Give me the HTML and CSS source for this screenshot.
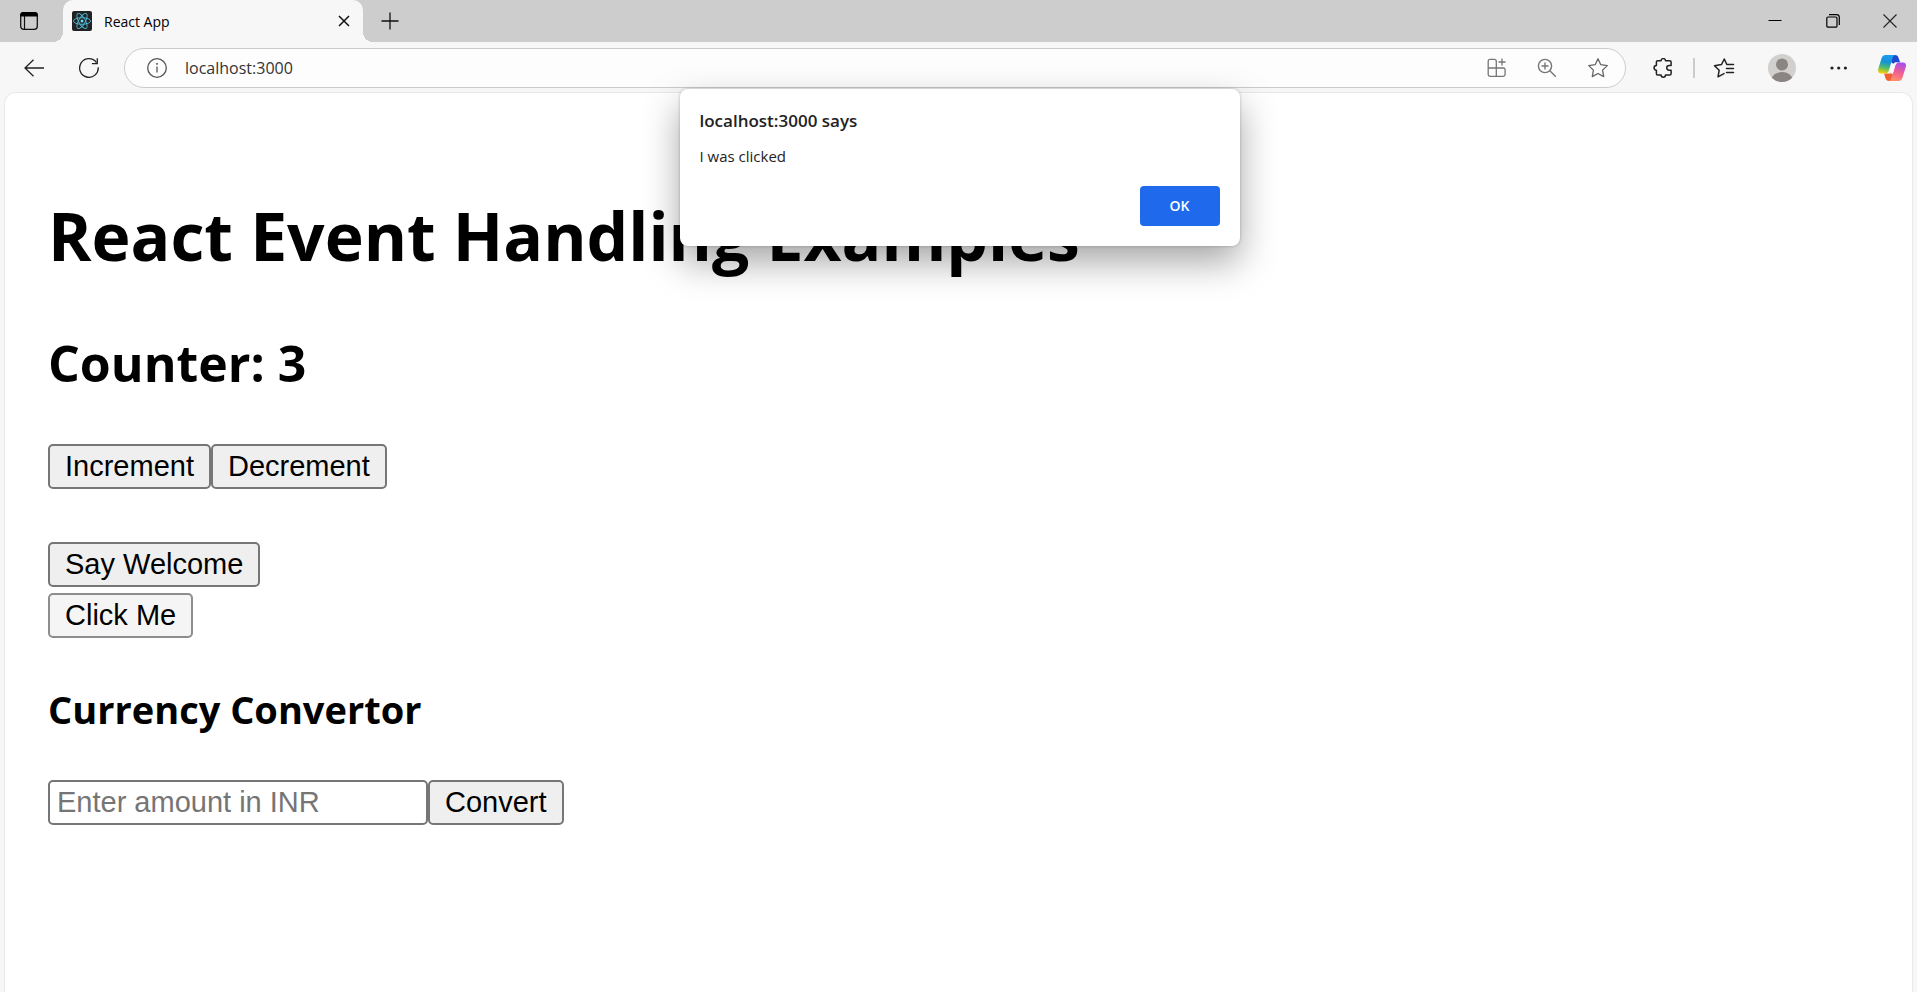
FILE: index.html
```html
<!DOCTYPE html>
<html lang="en">
<head>
<meta charset="utf-8">
<meta name="viewport" content="width=device-width, initial-scale=1">
<title>React App</title>
<link rel="stylesheet" href="styles.css">
</head>
<body>
<header class="browser">
  <div class="tab-strip">
    <button class="icon-button tab-actions" type="button" aria-label="Tab actions">
      <svg width="20" height="20" viewBox="0 0 20 20" fill="none" stroke="#111"><rect x="1.7" y="1.7" width="16.6" height="16.6" rx="3" stroke-width="1.3"/><path d="M1.2 5.5V4a3 3 0 0 1 3-3h11.600a3 3 0 0 1 3 3v1.500z" fill="#000" stroke="none"/><path d="M5.500 5v13" stroke-width="1.200"/></svg>
    </button>
    <div class="tab">
      <svg class="favicon" width="20" height="20" viewBox="0 0 20 20" fill="none" stroke="#4fb9d6" stroke-width="0.9"><rect width="20" height="20" rx="2" fill="#222" stroke="none"/><ellipse cx="10" cy="10" rx="8.600" ry="3.300"/><ellipse cx="10" cy="10" rx="8.600" ry="3.300" transform="rotate(60 10 10)"/><ellipse cx="10" cy="10" rx="8.600" ry="3.300" transform="rotate(120 10 10)"/><circle cx="10" cy="10" r="1.500" fill="#61dafb" stroke="none"/></svg>
      <span class="tab-title">React App</span>
      <button class="icon-button tab-close" type="button" aria-label="Close tab">
        <svg width="12" height="12" viewBox="0 0 12 12" stroke="#111" stroke-width="1.500"><path d="M1 1l10 10M11 1L1 11"/></svg>
      </button>
    </div>
    <button class="icon-button new-tab" type="button" aria-label="New tab">
      <svg width="18" height="18" viewBox="0 0 18 18" stroke="#111" stroke-width="1.300"><path d="M9 0.500v17M0.500 9h17"/></svg>
    </button>
    <div class="window-controls">
      <button class="icon-button window-button" type="button" aria-label="Minimize">
        <svg width="14" height="14" viewBox="0 0 14 14" stroke="#000"><path d="M0.500 6.500h13"/></svg>
      </button>
      <button class="icon-button window-button" type="button" aria-label="Restore">
        <svg width="14" height="14" viewBox="0 0 14 14" fill="none" stroke="#000"><rect x="0.800" y="3" width="10.200" height="10.200" rx="1.300" stroke-width="1.200"/><path d="M3 0.700h7.500a2.800 2.800 0 0 1 2.800 2.800V11" stroke-width="1.200"/></svg>
      </button>
      <button class="icon-button window-button" type="button" aria-label="Close">
        <svg width="14" height="14" viewBox="0 0 14 14" stroke="#222" stroke-width="1.100"><path d="M0.500 0.500l13 13M13.500 0.500l-13 13"/></svg>
      </button>
    </div>
  </div>

  <div class="toolbar">
    <button class="icon-button nav-button" type="button" aria-label="Back">
      <svg width="20" height="18" viewBox="0 0 20 18" fill="none" stroke="#222" stroke-width="1.300"><path d="M20 9H1M9.500 0.800L1 9l8.500 8.200"/></svg>
    </button>
    <button class="icon-button nav-button" type="button" aria-label="Refresh">
      <svg width="20" height="20" viewBox="0 0 20 20" fill="none" stroke="#222" stroke-width="1.300"><path d="M19.200 9.200A9.300 9.300 0 1 1 17.500 4.600"/><path d="M18.300 0.300v5.400h-5.400"/></svg>
    </button>
    <div class="address-bar">
      <svg class="site-info" width="20" height="20" viewBox="0 0 20 20" fill="none" stroke="#555" stroke-width="1.300"><circle cx="10" cy="10" r="9.300"/><path d="M10 8.500v6"/><path d="M10 5v1.700" stroke-width="1.600"/></svg>
      <input class="address" type="text" aria-label="Address" value="localhost:3000">
      <button class="icon-button" type="button" aria-label="App available">
        <svg width="20" height="20" viewBox="0 0 20 20" fill="none" stroke="#767676" stroke-width="1.300"><path d="M9.300 18.300V3.200a1.800 1.800 0 0 0-1.800-1.800H3a1.800 1.800 0 0 0-1.800 1.800v13.300A1.800 1.800 0 0 0 3 18.300h13.300a1.800 1.800 0 0 0 1.800-1.800v-4.700a1.800 1.800 0 0 0-1.800-1.800H1.200"/><path d="M15 0.500v7M11.500 4h7"/></svg>
      </button>
      <button class="icon-button" type="button" aria-label="Zoom">
        <svg width="20" height="20" viewBox="0 0 20 20" fill="none" stroke="#767676" stroke-width="1.400"><circle cx="8" cy="8" r="6.600"/><path d="M12.800 12.800l6 6M8 4.500v7M4.500 8h7"/></svg>
      </button>
      <button class="icon-button" type="button" aria-label="Add to favorites">
        <svg width="22" height="22" viewBox="0 0 22 22" fill="none" stroke="#666" stroke-width="1.300" stroke-linejoin="round"><path d="M11 1.800l2.800 5.900 6.500.9-4.700 4.500 1.100 6.500L11 16.500l-5.700 3.100 1.100-6.500L1.700 8.600l6.500-.9z"/></svg>
      </button>
    </div>
    <button class="icon-button extensions" type="button" aria-label="Extensions">
      <svg width="20" height="20" viewBox="0 0 20 20" fill="none" stroke="#222" stroke-width="1.500" stroke-linejoin="round"><path d="M4.700 2.800h3.400a2.200 2.200 0 0 1 4.400 0h4.300a1.300 1.300 0 0 1 1.300 1.300v3.400h-2a2.300 2.300 0 0 0 0 4.700h2v3.500a1.300 1.300 0 0 1-1.300 1.300h-4.300a2.200 2.200 0 0 1-4.400 0H4.700a1.300 1.300 0 0 1-1.300-1.300v-3.500a2.350 2.350 0 0 1 0-4.700V4.100a1.300 1.300 0 0 1 1.300-1.300z"/></svg>
    </button>
    <span class="divider"></span>
    <button class="icon-button favorites" type="button" aria-label="Favorites">
      <svg width="22" height="20" viewBox="0 0 22 20" fill="none" stroke="#222" stroke-width="1.500" stroke-linejoin="round" stroke-linecap="round"><path d="M20.500 6.500h-6.700L11.300 1 8.500 6.500l-7 1.200 4.700 4.500-1.200 6.600 6-3.200"/><path d="M13.500 10.500h7M13.500 14.500h7"/></svg>
    </button>
    <button class="icon-button profile" type="button" aria-label="Profile">
      <svg width="28" height="28" viewBox="0 0 28 28"><defs><clipPath id="avatar"><circle cx="14" cy="14" r="14"/></clipPath></defs><g clip-path="url(#avatar)"><path fill="#d2d0ce" d="M0 0h28v28H0z"/><circle cx="14" cy="10.500" r="6" fill="#8a8582"/><ellipse cx="14" cy="26" rx="10.500" ry="8" fill="#8a8582"/></g></svg>
    </button>
    <button class="icon-button more" type="button" aria-label="Settings and more">
      <svg width="18" height="4" viewBox="0 0 18 4" fill="#222"><circle cx="2" cy="2" r="1.600"/><circle cx="8.700" cy="2" r="1.600"/><circle cx="15.400" cy="2" r="1.600"/></svg>
    </button>
    <button class="icon-button copilot" type="button" aria-label="Copilot">
      <svg width="28" height="26" viewBox="0 0 28 26">
        <defs>
          <linearGradient id="cool" x1="0.600" y1="0" x2="0.400" y2="1"><stop offset="0" stop-color="#1b9cf0"/><stop offset="0.400" stop-color="#1592d8"/><stop offset="0.700" stop-color="#4fbd69"/><stop offset="1" stop-color="#f5cf10"/></linearGradient>
          <linearGradient id="warm" x1="0.700" y1="0" x2="0.400" y2="1"><stop offset="0" stop-color="#a64ff0"/><stop offset="0.500" stop-color="#ef5c98"/><stop offset="1" stop-color="#ff9069"/></linearGradient>
        </defs>
        <path fill="#1f49d0" d="M14 0h3c2 0 3 1 3.600 3l1.500 4.500h-4c-1.200 0-2 .5-2.500 1.500L13 7z"/>
        <path fill="#f2602f" d="M14 26h-3c-2 0-3-1-3.600-3L6 18.500h4c1.200 0 2-.5 2.500-1.500L15 19z"/>
        <path fill="url(#cool)" d="M7.500 0H18c-1.800 0-2.800 1-3.400 3l-3.800 12.500c-.7 2.200-1.800 3-4 3H3c-2.400 0-3.500-1.800-2.800-4.500L3.500 3.500C4.200 1.200 5.300 0 7.500 0z"/>
        <path fill="url(#warm)" d="M20.500 26H10c1.800 0 2.800-1 3.400-3l3.800-12.500c.7-2.200 1.800-3 4-3H25c2.400 0 3.500 1.800 2.800 4.500l-3.300 10.500c-.7 2.300-1.800 3.500-4 3.500z"/>
        <path fill="#fafafa" d="M17.800 7.500h3.400c-2.200 0-3.300.8-4 3l-2.400 8h-4.600c1.700 0 2.600-.9 3.200-3l1.700-5.500c.5-1.700 1.200-2.500 2.700-2.500z"/>
      </svg>
    </button>
  </div>
</header>

<main class="page">
  <h1 class="title">React Event Handling Examples</h1>
  <h2 class="counter">Counter: 3</h2>
  <div class="row counter-actions">
    <button class="control" type="button">Increment</button>
    <button class="control" type="button">Decrement</button>
  </div>
  <div class="messages">
    <button class="control" type="button">Say Welcome</button>
    <button class="control control-pressed" type="button">Click Me</button>
  </div>
  <h3 class="subtitle">Currency Convertor</h3>
  <form class="row">
    <input class="amount" type="text" aria-label="Amount in INR" placeholder="Enter amount in INR">
    <button class="control" type="button">Convert</button>
  </form>
</main>

<dialog class="alert" open aria-labelledby="alert-title">
  <h2 class="alert-title" id="alert-title">localhost:3000 says</h2>
  <p class="alert-text">I was clicked</p>
  <button class="alert-ok" type="button">OK</button>
</dialog>
</body>
</html>
```

FILE: styles.css
```css
* {
  box-sizing: border-box;
}

body {
  margin: 0;
  min-height: 100vh;
  display: flex;
  flex-direction: column;
  background: #f7f7f7;
  color: #000;
  font-family: "Open Sans", "Noto Sans", sans-serif;
}

button,
input {
  font: inherit;
}

svg {
  display: block;
  flex: none;
}

.icon-button {
  display: grid;
  place-items: center;
  flex: none;
  padding: 0;
  border: 0;
  background: none;
}

/* Tab strip */
.tab-strip {
  display: flex;
  height: 42px;
  background: #cdcdcd;
}

.tab-actions {
  width: 58px;
}

.tab {
  position: relative;
  display: flex;
  align-items: center;
  width: 300px;
  margin-left: 5px;
  padding: 0 13px 0 9px;
  border-radius: 10px 10px 0 0;
  background: #f7f7f7;
}

.tab::before,
.tab::after {
  content: "";
  position: absolute;
  bottom: 0;
  width: 10px;
  height: 10px;
}

.tab::before {
  right: 100%;
  background: radial-gradient(circle at 0 0, transparent 10px, #f7f7f7 10px);
}

.tab::after {
  left: 100%;
  background: radial-gradient(circle at 100% 0, transparent 10px, #f7f7f7 10px);
}

.tab-title {
  flex: 1;
  margin-left: 12px;
  font-size: 14px;
}

.new-tab {
  width: 54px;
}

.window-controls {
  display: flex;
  margin-left: auto;
}

.window-button {
  width: 58px;
}

.window-button:last-child {
  width: 55px;
}

/* Toolbar */
.toolbar {
  display: flex;
  align-items: center;
  height: 50px;
  padding: 1px 11px 0 6px;
}

.nav-button {
  width: 55px;
}

.address-bar {
  display: flex;
  flex: 1;
  align-items: center;
  gap: 30px;
  height: 40px;
  margin-left: 8px;
  padding: 0 16px 0 22px;
  border: 1px solid #ccc;
  border-radius: 20px;
  background: #fdfdfd;
}

.address {
  flex: 1;
  min-width: 0;
  margin-left: -12px;
  padding: 0;
  border: 0;
  outline: 0;
  background: none;
  color: #333;
  font-size: 16px;
}

.extensions {
  margin-left: 27px;
}

.divider {
  width: 2px;
  height: 20px;
  margin: 0 18px 0 20px;
  background: #ccc;
}

.profile {
  margin-left: 33px;
}

.more {
  margin-left: 34px;
}

.copilot {
  margin-left: 30px;
}

/* Web page */
.page {
  flex: 1;
  margin: 0 4px;
  padding: 94px 43px 44px;
  border: 1px solid #e9e9e9;
  border-bottom: 0;
  border-radius: 12px 12px 0 0;
  background: #fff;
}

.title,
.counter,
.subtitle {
  margin: 0;
  font-weight: 700;
}

.title {
  font-size: 66px;
  line-height: 96px;
}

.counter {
  margin: 44px 0 45px;
  font-size: 50px;
  line-height: 72px;
}

.subtitle {
  margin: 43px 0;
  font-size: 38px;
  line-height: 56px;
}

.row {
  display: flex;
}

.messages {
  display: flex;
  flex-direction: column;
  align-items: flex-start;
  gap: 6px;
  margin-top: 53px;
}

.control,
.amount {
  height: 45px;
  border: 2px solid #767676;
  border-radius: 5px;
  font-family: "Liberation Sans", Arial, sans-serif;
  font-size: 29px;
  line-height: 34px;
}

.control {
  padding: 0 15px 2px;
  background: #efefef;
  color: #000;
}

.control-pressed {
  border-color: #8d8d8d;
  background: #f5f5f5;
}

.amount {
  width: 380px;
  padding: 0 7px;
  background: #fff;
}

.amount::placeholder {
  color: #757575;
}

/* Alert */
.alert {
  position: absolute;
  top: 89px;
  left: 2px;
  right: 0;
  display: flex;
  flex-direction: column;
  width: 560px;
  margin: 0 auto;
  padding: 20px;
  border: 0;
  border-radius: 8px;
  background: #fff;
  color: #222;
  box-shadow: 0 0 3px rgba(0, 0, 0, 0.25), 0 16px 36px rgba(0, 0, 0, 0.35);
}

.alert-title {
  margin: 0;
  font-size: 17px;
  font-weight: 600;
  line-height: 24px;
}

.alert-text {
  margin: 13px 0 20px;
  font-size: 15px;
  line-height: 20px;
}

.alert-ok {
  align-self: flex-end;
  width: 80px;
  height: 40px;
  padding: 0 0 2px;
  border: 0;
  border-radius: 4px;
  background: #1f69ec;
  color: #fff;
  font-size: 14px;
  font-weight: 600;
}
```
